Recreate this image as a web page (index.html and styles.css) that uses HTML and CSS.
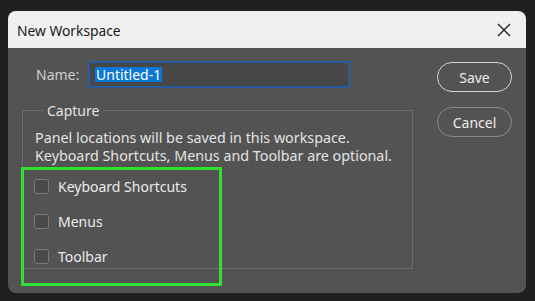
FILE: index.html
```html
<!DOCTYPE html>
<html>
<head>
<meta charset="utf-8">
<link rel="stylesheet" href="styles.css">
</head>
<body>
<div class="dialog">
  <div class="titlebar">
    <span class="title">New Workspace</span>
    <svg class="close" width="14" height="14" viewBox="0 0 14 14"><path d="M1 1 L13 13 M13 1 L1 13" stroke="#1a1a1a" stroke-width="1.3" fill="none"/></svg>
  </div>
  <div class="content">
    <div class="main">
      <div class="name-row">
        <label class="name-label">Name:</label>
        <div class="input"><span class="sel">Untitled-1</span></div>
      </div>
      <fieldset class="capture">
        <legend>Capture</legend>
        <p class="desc">Panel locations will be saved in this workspace.</p>
        <p class="desc">Keyboard Shortcuts, Menus and Toolbar are optional.</p>
        <div class="checks">
          <div class="check"><span class="box"></span><span>Keyboard Shortcuts</span></div>
          <div class="check"><span class="box"></span><span>Menus</span></div>
          <div class="check"><span class="box"></span><span>Toolbar</span></div>
        </div>
      </fieldset>
    </div>
    <div class="buttons">
      <button class="btn primary">Save</button>
      <button class="btn">Cancel</button>
    </div>
  </div>
</div>
<div class="highlight"></div>
</body>
</html>
```

FILE: styles.css
```css
html, body {
  margin: 0;
  padding: 0;
  background: #202020;
  font-family: "Noto Sans", "Open Sans", sans-serif;
}
body {
  width: 535px;
  height: 301px;
  overflow: hidden;
  position: relative;
}
.dialog {
  margin: 11px 0 0 8px;
  width: 518px;
  height: 282px;
  border-radius: 8px;
  background: #535353;
  overflow: hidden;
  display: flex;
  flex-direction: column;
}
.titlebar {
  height: 37px;
  background: #f0f0f0;
  display: flex;
  align-items: center;
  justify-content: space-between;
  padding: 0 15px 0 9px;
  flex-shrink: 0;
}
.title {
  font-size: 13.8px;
  color: #1a1a1a;
  position: relative;
  top: 1px;
}
.close { display: block; }
.content {
  display: flex;
  flex: 1;
  padding: 13px 14px 0 14px;
}
.main {
  flex: 1;
}
.name-row {
  display: flex;
  align-items: center;
  margin-left: 14px;
}
.name-label {
  font-size: 14px;
  color: #cfcfcf;
  width: 52px;
}
.input {
  width: 253px;
  height: 23px;
  border: 2px solid #2a5b9c;
  background: #474747;
  padding: 0 0 0 5px;
  display: flex;
  align-items: center;
}
.sel {
  background: #0a78d4;
  color: #ffffff;
  font-size: 14px;
  line-height: 15px;
  padding: 0 1px;
}
.capture {
  margin: 13px 0 0 0;
  width: 391px;
  height: 168px;
  border: 1px solid #6b6b6b;
  padding: 0 12px;
  box-sizing: border-box;
}
.capture legend {
  margin-left: 8px;
  padding: 0 4px;
  font-size: 14px;
  color: #e3e3e3;
}
.desc {
  margin: 0;
  font-size: 14.3px;
  line-height: 17.5px;
  height: 17.5px;
  color: #e3e3e3;
  white-space: nowrap;
}
.desc:first-of-type {
  margin-top: 9px;
}
.checks {
  margin-top: 12px;
  display: flex;
  flex-direction: column;
  gap: 15px;
}
.check {
  display: flex;
  align-items: center;
  gap: 9px;
  font-size: 14px;
  color: #ebebeb;
  height: 20px;
  margin-left: -1px;
}
.box {
  width: 13px;
  height: 13px;
  border: 1px solid #7a7a7a;
  border-radius: 3px;
  background: #4a4a4a;
}
.buttons {
  display: flex;
  flex-direction: column;
  gap: 15px;
  margin-top: 1px;
}
.btn {
  width: 75px;
  height: 30px;
  border-radius: 15px;
  border: 1px solid #8a8a8a;
  background: transparent;
  color: #ececec;
  font-family: "Noto Sans", "Open Sans", sans-serif;
  font-size: 14px;
  padding: 0;
}
.btn.primary {
  border: 1.5px solid #d6d6d6;
}
.highlight {
  position: absolute;
  left: 21px;
  top: 167px;
  width: 195px;
  height: 113px;
  border: 3px solid #2fe02f;
}
```
